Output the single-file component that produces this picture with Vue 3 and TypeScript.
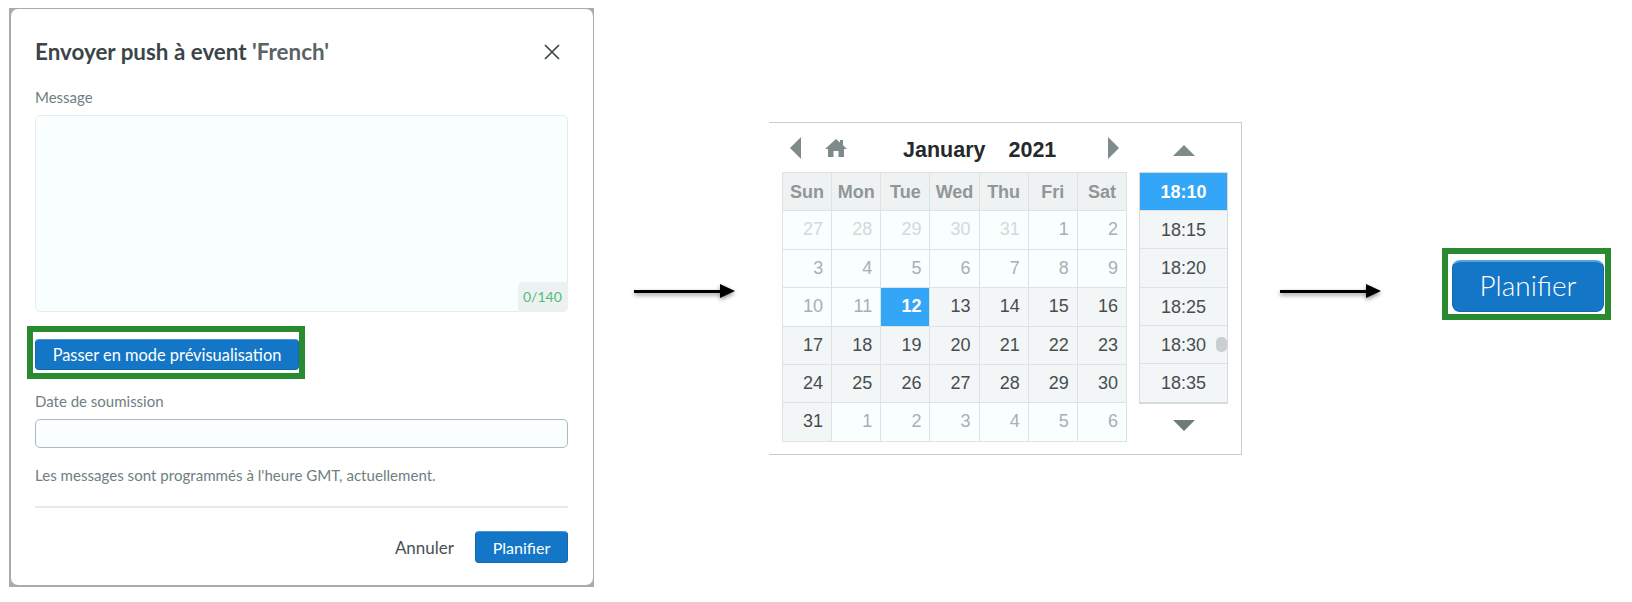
<script setup lang="ts">
interface Day { n: number; kind: 'muted' | 'faint' | 'cur' | 'sel' }
const heads = ['Sun', 'Mon', 'Tue', 'Wed', 'Thu', 'Fri', 'Sat']
const days: Day[] = []
for (const n of [27, 28, 29, 30, 31]) days.push({ n, kind: 'faint' })
for (let n = 1; n <= 11; n++) days.push({ n, kind: 'muted' })
days.push({ n: 12, kind: 'sel' })
for (let n = 13; n <= 31; n++) days.push({ n, kind: 'cur' })
for (let n = 1; n <= 6; n++) days.push({ n, kind: 'muted' })
const times = ['18:10', '18:15', '18:20', '18:25', '18:30', '18:35']
</script>

<template>
  <div class="page">
    <div class="frame">
      <section class="dialog">
        <header class="dlg-head">
          <h2 class="dlg-title">Envoyer push à event <span class="dlg-name">'French'</span></h2>
          <svg class="close" width="16" height="16" viewBox="0 0 16 16">
            <path d="M1 1 15 15M15 1 1 15" stroke="#3c4648" stroke-width="1.7" fill="none" />
          </svg>
        </header>
        <div class="label msg-label">Message</div>
        <div class="textarea"><span class="counter">0/140</span></div>
        <div class="hl hl-small"><button class="btn preview">Passer en mode prévisualisation</button></div>
        <div class="label date-label">Date de soumission</div>
        <div class="input"></div>
        <p class="help">Les messages sont programmés à l'heure GMT, actuellement.</p>
        <hr class="divider" />
        <footer class="dlg-foot">
          <span class="cancel">Annuler</span>
          <button class="btn plan">Planifier</button>
        </footer>
      </section>
    </div>

    <svg class="arrow arrow-a" width="104" height="24" viewBox="0 0 104 24">
      <path d="M1 11h88v3H1z" fill="#000" />
      <path d="M87 5l15 7-15 7z" fill="#000" />
    </svg>

    <section class="calendar">
      <div class="cal-main">
        <div class="cal-nav">
          <svg class="nav-prev" width="11" height="22" viewBox="0 0 11 22"><path d="M11 0v22L0 11z" fill="#7f8a8a" /></svg>
          <svg class="nav-home" width="22" height="18" viewBox="0 0 22 18"><path d="M11 0 15 3.600V1h3v5.300L22 10h-3v8h-5.500v-6h-5v6H3v-8H0z" fill="#7f8a8a" /></svg>
          <div class="cal-title"><span>January</span><span>2021</span></div>
          <svg class="nav-next" width="11" height="22" viewBox="0 0 11 22"><path d="M0 0v22L11 11z" fill="#7f8a8a" /></svg>
        </div>
        <div class="cal-grid">
          <div v-for="h in heads" :key="h" class="head">{{ h }}</div>
          <div v-for="(d, i) in days" :key="i" class="day" :class="d.kind">{{ d.n }}</div>
        </div>
      </div>
      <div class="cal-time">
        <svg class="tri" width="22" height="11" viewBox="0 0 22 11"><path d="M11 0 22 11H0z" fill="#7f8a8a" /></svg>
        <div class="time-list">
          <div v-for="(t, i) in times" :key="t" class="time" :class="{ on: i === 0 }">{{ t }}</div>
          <span class="thumb"></span>
        </div>
        <svg class="tri tri-down" width="22" height="11" viewBox="0 0 22 11"><path d="M0 0h22L11 11z" fill="#6f7a7a" /></svg>
      </div>
    </section>

    <svg class="arrow arrow-b" width="104" height="24" viewBox="0 0 104 24">
      <path d="M1 11h88v3H1z" fill="#000" />
      <path d="M87 5l15 7-15 7z" fill="#000" />
    </svg>

    <div class="hl hl-big"><button class="btn big">Planifier</button></div>
  </div>
</template>

<style>
html, body { margin: 0; background: #fff; }
</style>

<style scoped>
.page {
  width: 1632px;
  height: 602px;
  box-sizing: border-box;
  display: flex;
  align-items: flex-start;
  padding: 8px 0 0 9px;
  overflow: hidden;
  font-family: Lato, "Liberation Sans", sans-serif;
}

/* dialog */
.frame {
  flex: none;
  width: 585px;
  height: 579px;
  box-sizing: border-box;
  padding: 1px 1px 2px 2px;
  background: #a5adad;
}
.dialog {
  height: 100%;
  box-sizing: border-box;
  padding: 0 25px 0 24px;
  border-radius: 7px;
  background: #fff;
}
.dlg-head {
  display: flex;
  justify-content: space-between;
  align-items: center;
  box-sizing: border-box;
  height: 79px;
  padding: 6px 8px 0 0;
}
.dlg-title {
  margin: 0;
  font-size: 22.400px;
  font-weight: 700;
  color: #3b4547;
}
.dlg-name { color: #596365; }
.close { flex: none; }
.label {
  font-size: 15px;
  line-height: 18px;
  color: #6e8082;
}
.msg-label { height: 27px; }
.textarea {
  position: relative;
  height: 197px;
  box-sizing: border-box;
  border: 1px solid #e6ecec;
  border-radius: 5px;
  background: #f9fefe;
}
.counter {
  position: absolute;
  right: -1px;
  bottom: -1px;
  width: 50px;
  height: 30px;
  box-sizing: border-box;
  padding-left: 5px;
  border-radius: 5px 0 5px 0;
  background: #edf1f1;
  color: #4cc07c;
  font-size: 14px;
  line-height: 30px;
}
.btn {
  display: block;
  box-sizing: border-box;
  border: 1px solid #106aae;
  border-top-color: #4c97d6;
  color: #fff;
  background: #1476c6;
  font-family: Lato, "Liberation Sans", sans-serif;
  padding: 0;
}
.hl {
  box-sizing: border-box;
  flex: none;
  border: 6px solid #2a8a2f;
  background: #fff;
}
.hl-small {
  width: 278px;
  height: 53px;
  margin: 14px 0 0 -8px;
  padding: 7px 0 0 2px;
}
.preview {
  width: 264px;
  height: 31px;
  border-radius: 4px;
  font-size: 16.400px;
}
.date-label { margin-top: 13px; height: 27px; }
.input {
  height: 29px;
  box-sizing: border-box;
  border: 1.500px solid #a9bcbc;
  border-radius: 5px;
  background: #fbfefe;
}
.help {
  margin: 18px 0 0;
  font-size: 15.100px;
  line-height: 18px;
  color: #6e8082;
}
.divider {
  margin: 22px 0 0;
  border: 0;
  height: 2px;
  background: #e7ebec;
}
.dlg-foot {
  display: flex;
  justify-content: flex-end;
  align-items: center;
  gap: 21px;
  margin-top: 23px;
}
.cancel { font-size: 17px; color: #475153; }
.plan {
  width: 93px;
  height: 32px;
  border-radius: 4px;
  font-size: 16px;
}

/* arrows */
.arrow { flex: none; }
.arrow-a { margin: 271px 0 0 39px; filter: drop-shadow(0 2px 2px rgba(0, 0, 0, .45)); }
.arrow-b { margin: 271px 0 0 37px; filter: drop-shadow(0 2px 2px rgba(0, 0, 0, .45)); }

/* calendar */
.calendar {
  flex: none;
  display: flex;
  width: 473px;
  height: 333px;
  box-sizing: border-box;
  margin: 114px 0 0 32px;
  padding: 0 0 0 13px;
  border: solid #c7cccc;
  border-width: 1px 1.500px 1.500px 0;
  font-family: "Liberation Sans", Arial, sans-serif;
}
.cal-main { width: 345px; flex: none; }
.cal-nav {
  height: 49px;
  display: flex;
  align-items: center;
  padding: 0 8px;
}
.nav-prev { margin-top: 1px; }
.nav-home { margin-left: 24px; margin-top: 1px; }
.nav-next { margin-left: auto; margin-top: 1px; }
.cal-title {
  margin: 5px 0 0 56px;
  display: flex;
  gap: 23px;
  font-size: 21.500px;
  line-height: 28px;
  font-weight: 700;
  color: #25292a;
}
.cal-grid {
  display: grid;
  grid-template-columns: repeat(7, 1fr);
  grid-auto-rows: 38.400px;
  box-sizing: border-box;
  width: 345px;
  height: 270px;
  border: solid #dde2e2;
  border-width: 1px 0 0 1px;
}
.head, .day {
  box-sizing: border-box;
  border: solid #dde2e2;
  border-width: 0 1.500px 1.500px 0;
  font-size: 18px;
  line-height: 37px;
}
.head {
  background: #eef2f2;
  color: #8f9797;
  font-weight: 700;
  text-align: center;
  line-height: 39px;
}
.day { text-align: right; padding-right: 8px; }
.faint { background: #f9fefe; color: #d3d9d9; }
.muted { background: #f9fefe; color: #a9b0b0; }
.cur { background: #f2f6f6; color: #474d4e; }
.sel { background: #33a6f7; color: #fff; font-weight: 700; }

.cal-time {
  width: 89px;
  flex: none;
  margin-left: 12px;
  display: flex;
  flex-direction: column;
  align-items: center;
}
.tri { margin-top: 22px; height: 11px; }
.time-list {
  position: relative;
  width: 89px;
  box-sizing: border-box;
  margin-top: 16px;
  border: 1.500px solid #d5dada;
  border-bottom-width: 2px;
}
.tri-down { margin-top: 16px; }
.time {
  height: 38.200px;
  box-sizing: border-box;
  border-bottom: 1.500px solid #dde2e2;
  background: #f2f6f6;
  color: #474d4e;
  font-size: 18px;
  line-height: 39px;
  text-align: center;
}
.time:last-of-type { border-bottom: 0; }
.time.on { background: #33a6f7; color: #fff; font-weight: 700; }
.thumb {
  position: absolute;
  right: 0;
  top: 164px;
  width: 11px;
  height: 15px;
  border-radius: 5px;
  background: #c9cece;
}

/* big button */
.hl-big {
  width: 169px;
  height: 72px;
  margin: 240px 0 0 59px;
  padding: 6px 0 0 4px;
}
.big {
  width: 152px;
  height: 52px;
  padding-bottom: 4px;
  border-radius: 8px;
  font-size: 28px;
  font-weight: 300;
  background: #1476c6;
  border-color: #1269ad;
  border-top: 2px solid #5aa2dc;
}
</style>
